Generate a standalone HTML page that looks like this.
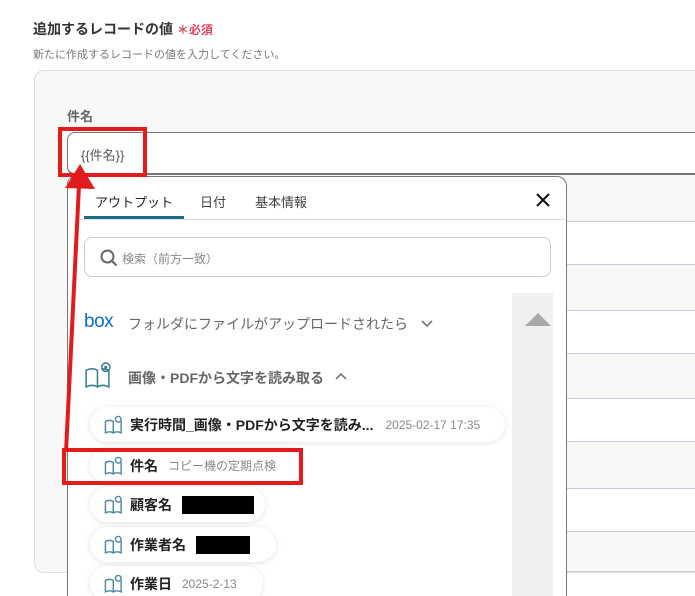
<!DOCTYPE html>
<html><head><meta charset="utf-8"><style>
*{margin:0;padding:0;box-sizing:border-box}
html,body{width:695px;height:596px;overflow:hidden}
body{background:#fff;font-family:"Liberation Sans","Noto Sans CJK JP",sans-serif;position:relative}
.a{position:absolute}
.pill{position:absolute;left:90px;height:35px;background:#fff;border-radius:18px;box-shadow:0 1px 6px rgba(0,0,0,.12);display:flex;align-items:center;padding-left:14px;font-size:14px;font-weight:bold;color:#222;white-space:nowrap}
.pill svg{margin-right:6px}
.sub{font-weight:normal;color:#888;font-size:12px;margin-left:10px}
.blk{background:#000;height:18px;margin-left:10px}
</style></head><body>
<div class="a" style="left:33px;top:19px;font-size:14px;font-weight:bold;color:#333">追加するレコードの値 <span style="color:#e8405a;font-size:12px">＊必須</span></div>
<div class="a" style="left:33px;top:46px;font-size:11px;color:#777">新たに作成するレコードの値を入力してください。</div>
<div class="a" style="left:34px;top:70px;width:700px;height:503px;border:1px solid #ddd;border-radius:10px;background:#f8f8f8"></div>
<div class="a" style="left:67px;top:106px;font-size:13px;font-weight:bold;color:#666">件名</div>
<div class="a" style="left:566px;top:221px;width:130px;height:43px;background:#fff;border-top:1px solid #ccd;"></div>
<div class="a" style="left:566px;top:264px;width:130px;height:46px;border-top:1px solid #ccd;"></div>
<div class="a" style="left:566px;top:310px;width:130px;height:43px;background:#fff;border-top:1px solid #ccd;"></div>
<div class="a" style="left:566px;top:353px;width:130px;height:45px;border-top:1px solid #ccd;"></div>
<div class="a" style="left:566px;top:398px;width:130px;height:43px;background:#fff;border-top:1px solid #ccd;"></div>
<div class="a" style="left:566px;top:441px;width:130px;height:47px;border-top:1px solid #ccd;"></div>
<div class="a" style="left:566px;top:488px;width:130px;height:43px;background:#fff;border-top:1px solid #ccd;"></div>
<div class="a" style="left:566px;top:531px;width:130px;height:41px;border-top:1px solid #ccd;border-bottom:1px solid #ccd"></div>
<div class="a" style="left:67px;top:132px;width:640px;height:43px;border:1px solid #777;border-bottom-width:2px;border-radius:8px 0 0 8px;background:#fff"></div>
<div class="a" style="left:81px;top:145px;font-size:13px;color:#555">{{件名}}</div>
<div class="a" style="left:67px;top:176px;width:500px;height:440px;border:1px solid #777;border-radius:8px 10px 0 0;background:#fff"></div>
<div class="a" style="left:95px;top:192px;font-size:13px;color:#222">アウトプット</div>
<div class="a" style="left:200px;top:192px;font-size:13px;color:#444">日付</div>
<div class="a" style="left:255px;top:192px;font-size:13px;color:#444">基本情報</div>
<div class="a" style="left:78px;top:219px;width:487px;height:1px;background:#ddd"></div>
<div class="a" style="left:84px;top:216px;width:100px;height:3px;background:#1a6d84"></div>
<svg class="a" style="left:535px;top:192px" width="16" height="16"><path d="M2 2L14 14M14 2L2 14" stroke="#111" stroke-width="2"/></svg>
<div class="a" style="left:84px;top:237px;width:467px;height:40px;border:1px solid #ccc;border-radius:8px"></div>
<svg class="a" style="left:100px;top:249px" width="18" height="18"><circle cx="7.5" cy="7.5" r="6" fill="none" stroke="#666" stroke-width="2"/><path d="M12 12L16.5 16.5" stroke="#666" stroke-width="2.2"/></svg>
<div class="a" style="left:122px;top:250px;font-size:12px;color:#888">検索（前方一致）</div>
<div class="a" style="left:512px;top:293px;width:41px;height:310px;background:#f0f0f0"></div>
<svg class="a" style="left:525px;top:313px" width="26" height="14"><path d="M0 13L13 0L26 13Z" fill="#a8a8a8"/></svg>
<div class="a" style="left:84px;top:311px;font-size:19px;color:#0a6fcf;letter-spacing:-0.5px">box</div>
<div class="a" style="left:128px;top:314px;font-size:14px;color:#666;white-space:nowrap">フォルダにファイルがアップロードされたら</div>
<svg class="a" style="left:421px;top:319px" width="12" height="10"><path d="M1 2L6 7L11 2" fill="none" stroke="#777" stroke-width="1.6"/></svg>
<svg class="a" style="left:84px;top:361px" width="29" height="29" viewBox="0 0 28 28"><path d="M2 9V25Q8 22 13 25V9Q8 6 2 9Z M13 25Q18 22 24 25V9Q20 7 17 8" fill="none" stroke="#3c7f95" stroke-width="1.5"/><circle cx="21" cy="6" r="4" fill="none" stroke="#3c7f95" stroke-width="1.5"/><circle cx="21" cy="6" r="1.5" fill="#3c7f95"/></svg>
<div class="a" style="left:128px;top:368px;font-size:14px;font-weight:bold;color:#666">画像・PDFから文字を読み取る</div>
<svg class="a" style="left:335px;top:372px" width="12" height="10"><path d="M1 7L6 2L11 7" fill="none" stroke="#777" stroke-width="1.6"/></svg>
<div class="pill" style="top:407px;width:415px"><svg width="20" height="20" viewBox="0 0 28 28"><path d="M2 9V25Q8 22 13 25V9Q8 6 2 9Z M13 25Q18 22 24 25V9" fill="none" stroke="#4a8aa0" stroke-width="2"/><circle cx="20" cy="6" r="4" fill="none" stroke="#4a8aa0" stroke-width="2"/></svg>実行時間_画像・PDFから文字を読み...<span class="sub" style="margin-left:12px">2025-02-17 17:35</span></div>
<div class="pill" style="top:448px;width:212px"><svg width="20" height="20" viewBox="0 0 28 28"><path d="M2 9V25Q8 22 13 25V9Q8 6 2 9Z M13 25Q18 22 24 25V9" fill="none" stroke="#4a8aa0" stroke-width="2"/><circle cx="20" cy="6" r="4" fill="none" stroke="#4a8aa0" stroke-width="2"/></svg>件名<span class="sub">コピー機の定期点検</span></div>
<div class="pill" style="top:487px;width:175px"><svg width="20" height="20" viewBox="0 0 28 28"><path d="M2 9V25Q8 22 13 25V9Q8 6 2 9Z M13 25Q18 22 24 25V9" fill="none" stroke="#4a8aa0" stroke-width="2"/><circle cx="20" cy="6" r="4" fill="none" stroke="#4a8aa0" stroke-width="2"/></svg>顧客名<span class="blk" style="width:72px"></span></div>
<div class="pill" style="top:527px;width:186px"><svg width="20" height="20" viewBox="0 0 28 28"><path d="M2 9V25Q8 22 13 25V9Q8 6 2 9Z M13 25Q18 22 24 25V9" fill="none" stroke="#4a8aa0" stroke-width="2"/><circle cx="20" cy="6" r="4" fill="none" stroke="#4a8aa0" stroke-width="2"/></svg>作業者名<span class="blk" style="width:54px;margin-left:10px"></span></div>
<div class="pill" style="top:566px;width:173px"><svg width="20" height="20" viewBox="0 0 28 28"><path d="M2 9V25Q8 22 13 25V9Q8 6 2 9Z M13 25Q18 22 24 25V9" fill="none" stroke="#4a8aa0" stroke-width="2"/><circle cx="20" cy="6" r="4" fill="none" stroke="#4a8aa0" stroke-width="2"/></svg>作業日<span class="sub">2025-2-13</span></div>
<div class="a" style="left:58px;top:127px;width:89px;height:50px;border:4px solid #e21c1c"></div>
<div class="a" style="left:62px;top:448px;width:241px;height:37px;border:4px solid #e21c1c"></div>
<svg class="a" style="left:0;top:0" width="695" height="596"><path d="M79 185L66 452" stroke="#e21c1c" stroke-width="4"/><path d="M80 164L95 189L65 188Z" fill="#e21c1c"/></svg>
</body></html>
